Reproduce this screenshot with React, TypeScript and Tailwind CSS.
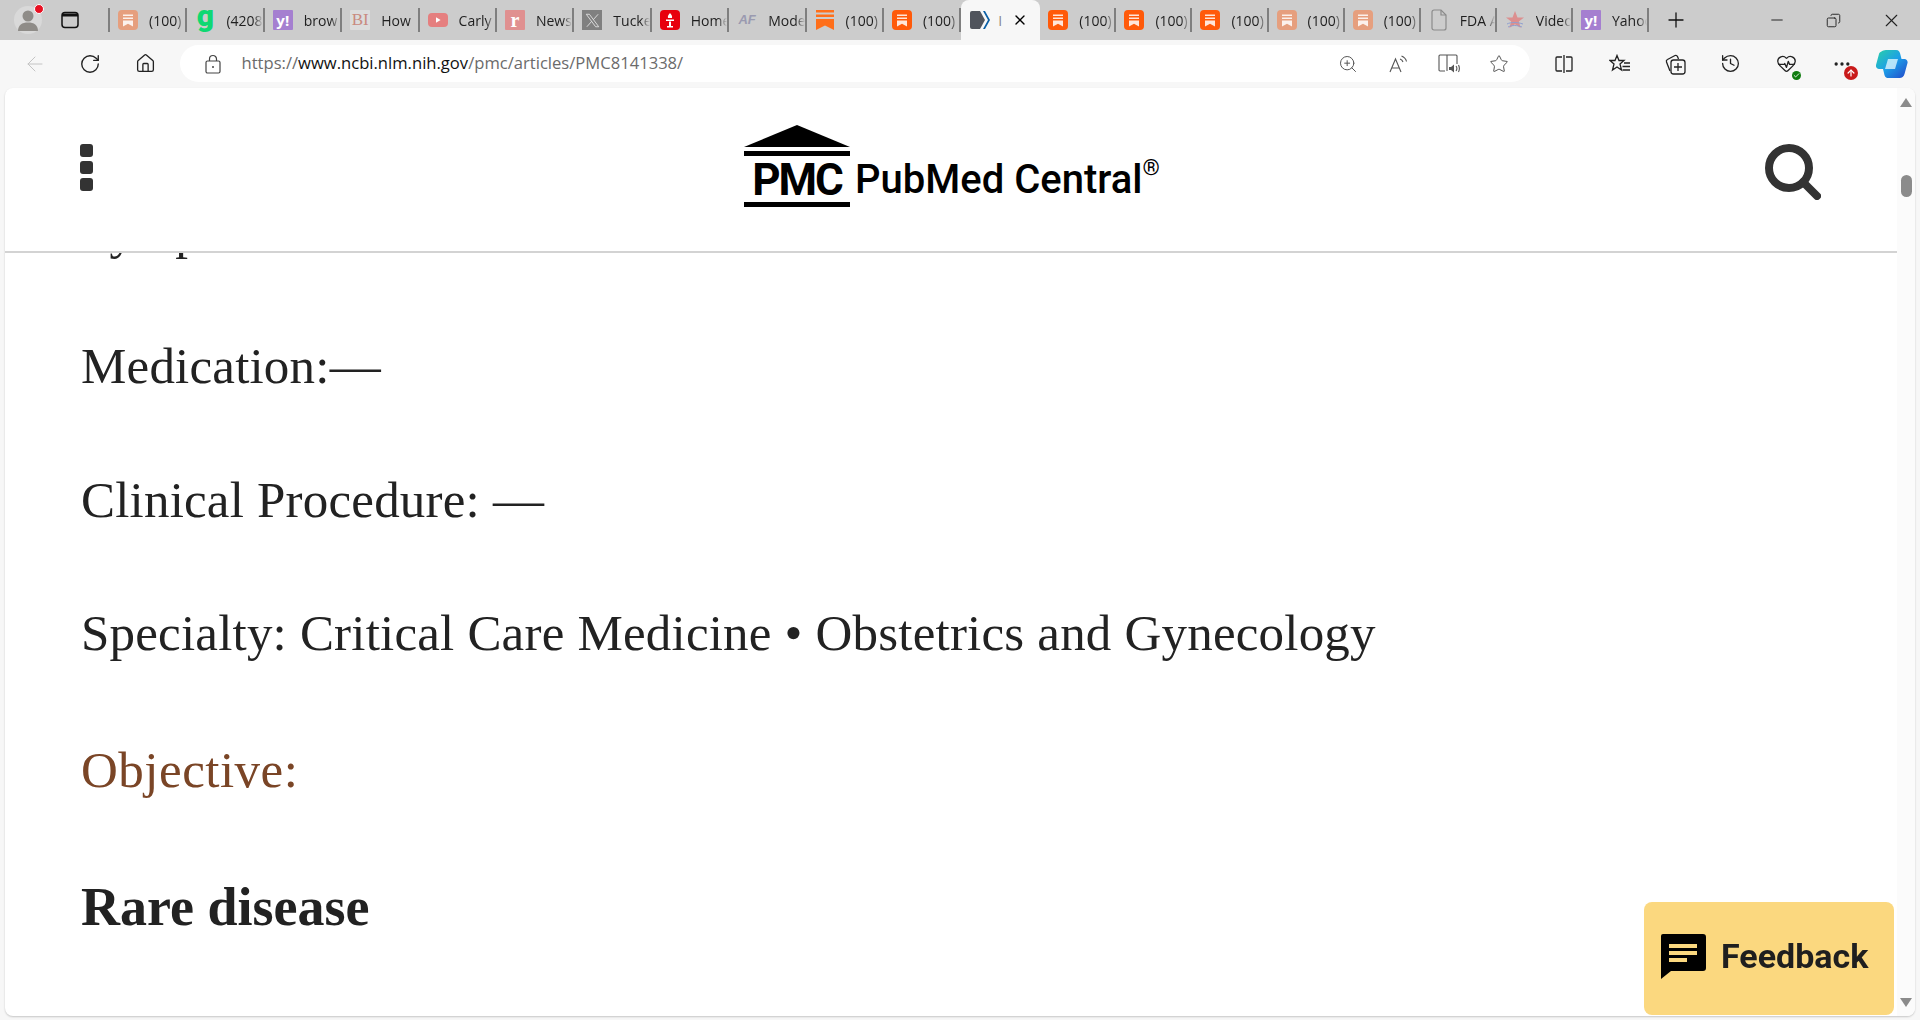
import { ArrowLeft, RotateCw, Home, ZoomIn, Star, X, Plus, Minus, History, MoreHorizontal, ArrowUp, Check, HeartPulse, Copy } from 'lucide-react'
import { ReactNode } from 'react'

const uiFont = "[font-family:'Open_Sans','Noto_Sans',sans-serif]"

function Bookmark({ color = '#ff5a0a' }: { color?: string }) {
  return (
    <svg width="20" height="20" viewBox="0 0 20 20">
      <rect width="20" height="20" rx="4" fill={color} />
      <path d="M5 4.500h10v1.600H5zM5 7.500h10v1.600H5zM5 10.500h10v6l-5-2.800-5 2.800z" fill="#fff" opacity="0.85" />
    </svg>
  )
}

function Letter({ bg, color = '#fff', children }: { bg: string; color?: string; children: ReactNode }) {
  return (
    <span
      className="flex h-5 w-5 items-center justify-center rounded-[1px] text-[15px] font-bold"
      style={{ background: bg, color }}
    >
      {children}
    </span>
  )
}

const firstTabs: { icon: ReactNode; label: string }[] = [
  { icon: <Bookmark color="#e69f7e" />, label: '(100)' },
  { icon: <span className="flex h-5 w-5 items-center justify-center pb-[8px] text-[30px] leading-none font-black text-[#0fd872] [font-family:'Roboto',sans-serif]">g</span>, label: '(4208' },
  { icon: <Letter bg="#a57fd0">y!</Letter>, label: 'brow' },
  { icon: <Letter bg="#dcdcdc" color="#c98a80"><span className="text-[17px] font-normal [font-family:'Liberation_Serif',serif]">BI</span></Letter>, label: 'How' },
  {
    icon: (
      <svg width="20" height="20" viewBox="0 0 20 20">
        <rect y="3" width="20" height="14" rx="4" fill="#e57f7f" />
        <path d="M8 7.200v5.600l4.600-2.800z" fill="#fff" />
      </svg>
    ),
    label: 'Carly',
  },
  { icon: <Letter bg="#e09090"><span className="text-[20px] [font-family:'Liberation_Serif',serif]">r</span></Letter>, label: 'News' },
  {
    icon: (
      <span className="flex h-5 w-5 items-center justify-center bg-[#808080]">
        <svg width="15" height="15" viewBox="0 0 24 24" fill="none" stroke="#ddd" strokeWidth="1.500">
          <path d="M2 2h5l15 20h-5zM21 2L13 11M3 22l8-9" />
        </svg>
      </span>
    ),
    label: 'Tucke',
  },
  {
    icon: (
      <svg width="20" height="20" viewBox="0 0 20 20">
        <rect width="20" height="20" rx="4" fill="#e8000d" />
        <path d="M10 3c2 2 2.400 3.400 2 5H8c-.4-1.600 0-3 2-5zM6 9.500h8v1.500H6zM9 11.500h2V16h2v1.500H7V16h2z" fill="#fff" />
      </svg>
    ),
    label: 'Home',
  },
  {
    icon: (
      <span className="flex h-5 w-5 items-center justify-center text-[13px] font-bold italic text-[#9a9ab0] [font-family:'Liberation_Sans',sans-serif]">
        AF
      </span>
    ),
    label: 'Mode',
  },
  {
    icon: (
      <svg width="20" height="20" viewBox="0 0 20 20">
        <path d="M1 0h18v2.500H1zM1 4.500h18V7H1z" fill="#ff6f1a" />
        <path d="M1 9h18v11l-9-4.500L1 20z" fill="#ff6f1a" />
      </svg>
    ),
    label: '(100)',
  },
  { icon: <Bookmark />, label: '(100)' },
]

const lastTabs: { icon: ReactNode; label: string }[] = [
  { icon: <Bookmark />, label: '(100)' },
  { icon: <Bookmark />, label: '(100)' },
  { icon: <Bookmark />, label: '(100)' },
  { icon: <Bookmark color="#e69f7e" />, label: '(100)' },
  { icon: <Bookmark color="#e69f7e" />, label: '(100)' },
  {
    icon: (
      <svg width="20" height="22" viewBox="0 0 20 22" fill="none" stroke="#8a8a8a" strokeWidth="1.200">
        <path d="M3 3a2 2 0 0 1 2-2h7l5 5v13a2 2 0 0 1-2 2H5a2 2 0 0 1-2-2z" />
        <path d="M12 1v5h5" />
      </svg>
    ),
    label: 'FDA A',
  },
  {
    icon: (
      <svg width="20" height="20" viewBox="0 0 20 20">
        <path d="M10 1l2.500 6.500H19l-5.200 4 2 6.500L10 14.200 4.200 18l2-6.500L1 7.500h6.500z" fill="#dc8f8f" />
        <path d="M2 14c4-2 10-2 16 0M3 17c4-2 9-2 14 0" stroke="#8f9fd0" fill="none" />
      </svg>
    ),
    label: 'Video',
  },
  { icon: <Letter bg="#a57fd0">y!</Letter>, label: 'Yahoo' },
]

function Tab({ icon, label, width }: { icon: ReactNode; label: string; width: string }) {
  return (
    <div className={`flex h-6 shrink-0 items-center border-r-2 border-[#7f7f7f] pl-2 ${width}`}>
      <span className="flex w-[31px] shrink-0">{icon}</span>
      <span className="min-w-0 flex-1 overflow-hidden pr-0.5 text-[14px] whitespace-nowrap text-[#1f1f1f] [mask-image:linear-gradient(to_right,black_75%,transparent)]">
        {label}
      </span>
    </div>
  )
}

function ToolCell({ children }: { children: ReactNode }) {
  return <div className="relative flex h-[37px] w-[55.500px] shrink-0 items-center justify-center text-[#222]">{children}</div>
}

export default function App() {
  return (
    <div className={`flex h-[1020px] w-[1920px] flex-col overflow-hidden bg-[#f7f7f7] ${uiFont}`}>
      {/* tab strip */}
      <div className="flex h-10 shrink-0 items-center bg-[#cccccc]">
        <div className="relative ml-3.5 flex h-7 w-7 items-center justify-center rounded-full bg-[#d9d9d9]">
          <svg width="26" height="26" viewBox="0 0 26 26" fill="#8f8c88">
            <circle cx="13" cy="9" r="5.500" />
            <path d="M3 24c0-6 4-8.500 10-8.500S23 18 23 24z" />
          </svg>
          <span className="absolute -top-0.5 right-[-2px] h-2.5 w-2.5 rounded-full border border-white bg-[#e81123]" />
        </div>
        <div className="ml-[19px] flex h-6 w-[47px] items-center">
          <svg width="18" height="18" viewBox="0 0 18 18" fill="none" stroke="#111" strokeWidth="1.500">
            <rect x="1" y="1.500" width="16" height="15" rx="3" />
            <path d="M1 4h16" strokeWidth="3" />
          </svg>
        </div>
        <div className="h-6 w-0.5 bg-[#7f7f7f]" />
        <div className="flex">
          {firstTabs.map((t, i) => (
            <Tab key={i} icon={t.icon} label={t.label} width="w-[77.400px]" />
          ))}
        </div>
        {/* active tab */}
        <div className="flex h-10 w-[79px] shrink-0 items-center rounded-t-lg bg-[#f7f7f7] pl-2">
          <svg width="22" height="20" viewBox="0 0 22 20" className="shrink-0">
            <path d="M1 3a2 2 0 0 1 2-2h8l5 9-5 9H3a2 2 0 0 1-2-2z" fill="#50545c" />
            <path d="M14 1h2l5 9-5 9h-2l5-9z" fill="#0b5fa5" />
          </svg>
          <span className="ml-[7px] text-[14px] text-[#888]">I</span>
          <X size={16} strokeWidth={2} className="ml-2.5 shrink-0 text-black" />
        </div>
        <div className="flex">
          {lastTabs.map((t, i) => (
            <Tab key={i} icon={t.icon} label={t.label} width="w-[76.100px]" />
          ))}
        </div>
        <Plus size={24} strokeWidth={1.300} className="ml-[15px] text-[#111]" />
        <div className="ml-auto flex items-center text-[#222]">
          <div className="flex w-[57px] justify-center"><Minus size={18} strokeWidth={1.300} /></div>
          <div className="flex w-[57px] justify-center"><Copy size={15} strokeWidth={1.500} className="scale-x-[-1]" /></div>
          <div className="flex w-[58px] justify-center"><X size={21} strokeWidth={1.300} /></div>
        </div>
      </div>

      {/* address row */}
      <div className="flex h-12 shrink-0 items-start pt-[5px]">
        <div className="ml-[7px] flex">
          <ToolCell><ArrowLeft size={24} strokeWidth={1} className="text-[#c4c4c4]" /></ToolCell>
          <ToolCell><RotateCw size={22} strokeWidth={1.500} /></ToolCell>
          <ToolCell><Home size={21} strokeWidth={1.500} /></ToolCell>
        </div>
        <div className="ml-[6px] flex h-[37px] w-[1350px] items-center rounded-full bg-white pl-[24px]">
          <svg width="18" height="20" viewBox="0 0 18 20" fill="none" stroke="#444" strokeWidth="1.200">
            <rect x="2" y="7" width="14" height="12" rx="1.500" />
            <path d="M5.500 7V5a3.500 3.500 0 0 1 7 0v2" />
            <circle cx="9" cy="13" r="1" fill="#444" stroke="none" />
          </svg>
          <span className="ml-[20px] text-[16.600px] text-[#6b6b6b]">
            https://<span className="text-[#111]">www.ncbi.nlm.nih.gov</span>/pmc/articles/PMC8141338/
          </span>
          <div className="ml-auto flex items-center pr-[6px]">
            <div className="flex w-[51px] justify-center text-[#555]"><ZoomIn size={20} strokeWidth={1.200} /></div>
            <div className="flex w-[50px] justify-center">
              <svg width="20" height="20" viewBox="0 0 20 20" fill="none" stroke="#555" strokeWidth="1.100">
                <path d="M1 18L6.500 5 12 18M3 14h7" />
                <path d="M11 5c1.500.5 2.500 1.500 3 3M12.500 2c2.500 1 4.500 3 5 5.500" />
              </svg>
            </div>
            <div className="flex w-[50px] justify-center">
              <svg width="22" height="20" viewBox="0 0 22 20" fill="none" stroke="#555" strokeWidth="1.100">
                <path d="M7 17H2a1 1 0 0 1-1-1V2a1 1 0 0 1 1-1h7v16M9 1h9a1 1 0 0 1 1 1v8" />
                <path d="M11 13h2l3-2.500v8L13 16h-2z" fill="#555" stroke="none" />
                <path d="M18 12c1 1.300 1 3.500 0 5M20.500 11c1 2 1 5 0 7" />
              </svg>
            </div>
            <div className="flex w-[50px] justify-center text-[#555]"><Star size={20} strokeWidth={1.200} /></div>
          </div>
        </div>
        <div className="ml-[7px] flex">
          <ToolCell>
            <svg width="20" height="20" viewBox="0 0 20 20" fill="none" stroke="#222" strokeWidth="1.300">
              <path d="M8 3H3a1 1 0 0 0-1 1v12a1 1 0 0 0 1 1h5M12 3h5a1 1 0 0 1 1 1v12a1 1 0 0 1-1 1h-5M10 1v18" />
            </svg>
          </ToolCell>
          <ToolCell>
            <svg width="22" height="20" viewBox="0 0 22 20" fill="none" stroke="#222" strokeWidth="1.300">
              <path d="M8 1.500l2 5h5l-4 3.500 1.500 6L8 13l-4.500 3L5 10 1 6.500h5z" />
              <path d="M15 9h6M13.500 12.500H21M13.500 16H21" />
            </svg>
          </ToolCell>
          <ToolCell>
            <svg width="22" height="22" viewBox="0 0 22 22" fill="none" stroke="#222" strokeWidth="1.300">
              <path d="M6 18L2.500 9a2 2 0 0 1 1-2.500L11 2.500a2 2 0 0 1 2.500 1L14.500 6" />
              <rect x="7" y="7" width="14" height="14" rx="2.500" />
              <path d="M14 10v8M10 14h8" />
            </svg>
          </ToolCell>
          <ToolCell><History size={21} strokeWidth={1.500} /></ToolCell>
          <ToolCell>
            <HeartPulse size={21} strokeWidth={1.500} />
            <span className="absolute right-[13px] bottom-[2px] flex h-[9px] w-[9px] items-center justify-center rounded-full bg-[#107c10]">
              <Check size={7} strokeWidth={3} className="text-white" />
            </span>
          </ToolCell>
          <ToolCell>
            <MoreHorizontal size={20} strokeWidth={2} />
            <span className="absolute right-[12px] bottom-[2px] flex h-[14px] w-[14px] items-center justify-center rounded-full bg-[#c91a1a]">
              <ArrowUp size={10} strokeWidth={3} className="text-white" />
            </span>
          </ToolCell>
          <div className="flex h-[37px] w-[44px] items-center justify-center">
            <svg width="32" height="28" viewBox="0 0 32 28">
              <defs>
                <linearGradient id="cop" x1="0" y1="0" x2="1" y2="1">
                  <stop offset="0" stopColor="#2bd0a8" />
                  <stop offset="0.5" stopColor="#1c9fe8" />
                  <stop offset="1" stopColor="#2347c9" />
                </linearGradient>
              </defs>
              <path d="M11 0h9c3 0 4 2 4.500 5l1 4h3c2 0 3.500 2 3 4l-3 11c-.7 2.500-2.500 4-5 4h-11c-3 0-4-2-4.500-5l-1-4H3c-2 0-3.500-2-3-4L3 4c.8-2.500 5-4 8-4z" fill="url(#cop)" />
              <path d="M12 9h10l-3 10H9z" fill="#e9fbff" opacity="0.75" />
            </svg>
          </div>
        </div>
      </div>

      {/* page */}
      <div className="mb-1 ml-[5px] flex min-h-0 w-[1910px] flex-1 overflow-hidden rounded-lg bg-white shadow-[0_1px_2px_rgba(0,0,0,0.2)]">
        <div className="relative flex min-w-0 flex-1 flex-col">
          <header className="flex h-[165px] shrink-0 items-center border-b-2 border-[#d3d3d3] pr-[76px] pl-[75px]">
            <div className="flex flex-col gap-[4px] pb-[4px]">
              <span className="h-[13px] w-[13px] rounded-[3px] bg-[#333]" />
              <span className="h-[13px] w-[13px] rounded-[3px] bg-[#333]" />
              <span className="h-[13px] w-[13px] rounded-[3px] bg-[#333]" />
            </div>
            <div className="mb-[7px] ml-[651px] flex items-end text-black [font-family:'Roboto',sans-serif]">
              <div className="flex w-[106px] flex-col items-stretch">
                <svg width="106" height="22" viewBox="0 0 106 22" className="block">
                  <path d="M53 0L106 22H0z" fill="#000" />
                </svg>
                <div className="mt-[4px] h-[5px] bg-black" />
                <div className="flex h-[46px] items-center justify-center pt-[2px] text-[44px] leading-none font-bold tracking-[-2px]">PMC</div>
                <div className="h-[5px] bg-black" />
              </div>
              <div className="ml-[5px] pb-[2px] text-[40px] leading-[50px] font-medium whitespace-nowrap">
                PubMed Central<sup className="relative top-[-4px] text-[22px] align-super font-normal">®</sup>
              </div>
            </div>
            <svg width="56" height="56" viewBox="0 0 56 56" fill="none" stroke="#333" strokeWidth="8" strokeLinecap="round" className="mt-1 ml-auto">
              <circle cx="24" cy="24" r="20" />
              <path d="M38 38l14 14" />
            </svg>
          </header>
          <main className="min-h-0 flex-1 overflow-hidden pl-[76px] text-[51px] leading-[58px] tracking-[0.2px] text-[#222] [font-family:'Liberation_Serif',serif]">
            <p className="-mt-[51px]">Symptoms:</p>
            <p className="mt-[77px]">Medication:—</p>
            <p className="mt-[76px]">Clinical Procedure: —</p>
            <p className="mt-[75px]">Specialty: Critical Care Medicine • Obstetrics and Gynecology</p>
            <p className="mt-[79px] tracking-[0.5px] text-[#7a4526]">Objective:</p>
            <p className="mt-[79px] text-[54px] font-bold tracking-normal">Rare disease</p>
          </main>
          <div className="absolute right-[3px] bottom-[1px] flex h-[113px] w-[250px] items-center rounded-[8px] bg-[#fbd87f] pb-[6px] pl-[16px] [font-family:'Roboto',sans-serif]">
            <svg width="46" height="46" viewBox="0 0 46 46" className="shrink-0">
              <path d="M3 1h40a3 3 0 0 1 3 3v31a3 3 0 0 1-3 3H11L1 46V3a2 2 0 0 1 2-2z" fill="#000" />
              <path d="M9 11h28v4H9zM9 18h28v4H9zM9 25h18v4H9z" fill="#fbd87f" />
            </svg>
            <span className="ml-[15px] text-[34px] leading-none font-bold text-[#1f1f1f] blur-[0.5px]">Feedback</span>
          </div>
        </div>
        {/* scrollbar */}
        <div className="relative flex w-[18px] shrink-0 flex-col items-center bg-[#fbfbfb] pt-[10px]">
          <span className="h-0 w-0 border-x-[6px] border-b-[9px] border-x-transparent border-b-[#8b8b8b]" />
          <span className="mt-[68px] h-[22px] w-[11px] rounded-full bg-[#8b8b8b]" />
          <span className="mt-auto mb-[9px] h-0 w-0 border-x-[6px] border-t-[9px] border-x-transparent border-t-[#8b8b8b]" />
        </div>
      </div>
    </div>
  )
}
